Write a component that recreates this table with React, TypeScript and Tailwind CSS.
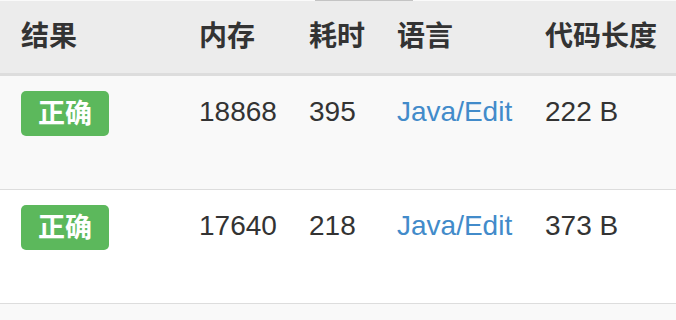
import React from "react";

type Row = { memory: string; time: string; length: string; striped: boolean };

const rows: Row[] = [
  { memory: "18868", time: "395", length: "222 B", striped: true },
  { memory: "17640", time: "218", length: "373 B", striped: false },
];

const font = { fontFamily: '"Liberation Sans", "Noto Sans CJK SC", Arial, sans-serif' };

const cols = "grid grid-cols-[178px_110px_88px_148px_1fr] pl-[21px]";

const Watermark = () => (
  <div className="pointer-events-none absolute inset-0 overflow-hidden select-none text-[34px] text-black/[0.022]">
    <span className="absolute left-[190px] top-[196px] -rotate-12">HUSTOJ</span>
    <span className="absolute left-[360px] top-[186px] -rotate-[30deg]">ACM</span>
    <span className="absolute left-[205px] top-[248px] -rotate-[25deg] text-[44px]">OC</span>
    <span className="absolute left-[600px] top-[196px] -rotate-12">HUST</span>
    <span className="absolute left-[610px] top-[250px] -rotate-[25deg] text-[44px]">O</span>
    <span className="absolute left-[60px] top-[170px] -rotate-[30deg]">ACM</span>
  </div>
);

export default function App() {
  return (
    <div className="relative h-[320px] w-[676px] overflow-hidden bg-white text-[#333]" style={font}>
      <div className="relative h-px bg-[#fafafa]">
        <div className="absolute left-[315px] top-0 h-px w-[98px] bg-[#c4c4c4]" />
      </div>
      <div className={`${cols} h-[75px] items-center border-b-[3px] border-[#dddddd] bg-[#ececec] text-[28px] font-bold leading-[40px]`}>
        <div>结果</div>
        <div>内存</div>
        <div>耗时</div>
        <div>语言</div>
        <div>代码长度</div>
      </div>
      {rows.map((r, i) => (
        <div
          key={i}
          className={`${cols} h-[114px] border-b border-[#dddddd] text-[28px] leading-[40px] ${r.striped ? "bg-[#f9f9f9]" : "bg-white"}`}
        >
          <div className="pt-[15px]">
            <span className="inline-flex h-[45px] w-[88px] items-center justify-center rounded-[5px] bg-[#5cb85c] text-[27px] font-bold text-white">
              正确
            </span>
          </div>
          <div className="pt-4">{r.memory}</div>
          <div className="pt-4">{r.time}</div>
          <div className="pt-4 text-[#428bca]">
            <a>Java</a>/<a>Edit</a>
          </div>
          <div className="pt-4">{r.length}</div>
        </div>
      ))}
      <div className="h-[40px] bg-[#f9f9f9]" />
      <Watermark />
    </div>
  );
}
